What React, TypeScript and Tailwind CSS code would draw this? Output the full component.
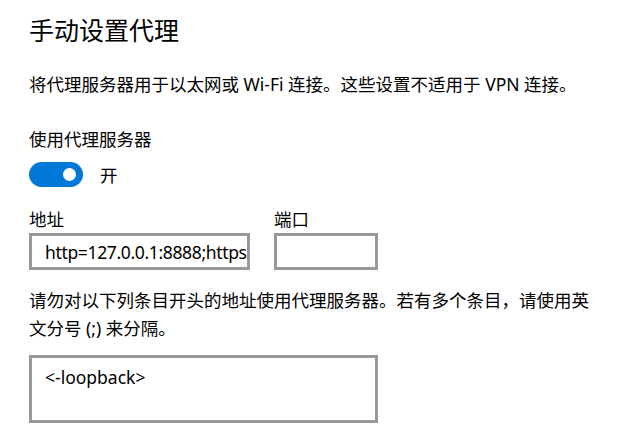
export default function App() {
  return (
    <div className="min-h-screen w-[639px] bg-white pl-[29px] pt-[13px] font-['Segoe_UI','Noto_Sans','Noto_Sans_CJK_SC',sans-serif] text-black">
      <h1 className="text-[25px] leading-[34px] font-normal">手动设置代理</h1>

      <p className="mt-[25px] text-[17.5px] leading-[24px] whitespace-nowrap">
        将代理服务器用于以太网或 Wi-Fi 连接。这些设置不适用于 VPN 连接。
      </p>

      <div className="mt-[31px] text-[17.5px] leading-[24px]">使用代理服务器</div>

      <div className="mt-[11px] flex items-center gap-[17px]">
        <div className="flex h-[25px] w-[54px] items-center justify-end rounded-full bg-[#0078d7] pr-[7px]">
          <div className="h-[13px] w-[13px] rounded-full bg-white" />
        </div>
        <span className="text-[17.5px] leading-[24px]">开</span>
      </div>

      <div className="mt-[22px] flex gap-[24px]">
        <div className="flex flex-col">
          <span className="text-[17.5px] leading-[20px]">地址</span>
          <div className="mt-[4px] flex h-[37px] w-[221px] items-center overflow-hidden border-[3px] border-[#999999] pl-[13px]">
            <span className="whitespace-nowrap text-[17.5px] leading-[24px] tracking-[-0.35px]">
              http=127.0.0.1:8888;https
            </span>
          </div>
        </div>
        <div className="flex flex-col">
          <span className="text-[17.5px] leading-[20px]">端口</span>
          <div className="mt-[4px] h-[37px] w-[104px] border-[3px] border-[#999999]" />
        </div>
      </div>

      <p className="mt-[16px] w-[568px] text-[17.5px] leading-[28px]">
        请勿对以下列条目开头的地址使用代理服务器。若有多个条目，请使用英文分号 (;) 来分隔。
      </p>

      <div className="mt-[13px] h-[68px] w-[349px] border-[3px] border-[#999999] pl-[13px] pt-[7px]">
        <span className="text-[17.5px] leading-[24px]">&lt;-loopback&gt;</span>
      </div>
    </div>
  );
}
